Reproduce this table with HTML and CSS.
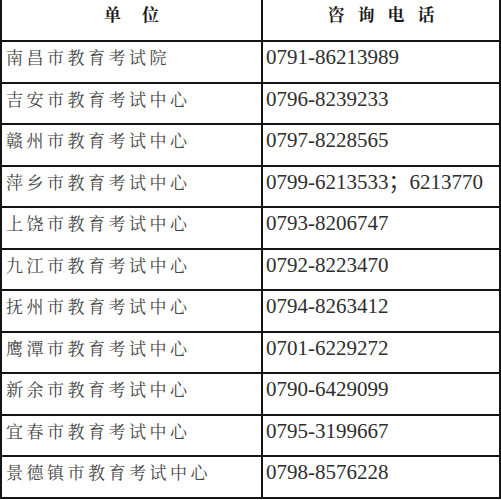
FILE: index.html
```html
<!DOCTYPE html>
<html lang="zh">
<head>
<meta charset="utf-8">
<link rel="stylesheet" href="styles.css">
</head>
<body>
<div class="table">
  <div class="row head">
    <div class="cell name"><span class="h1">单位</span></div>
    <div class="cell phone"><span class="h2">咨询电话</span></div>
  </div>
  <div class="row"><div class="cell name">南昌市教育考试院</div><div class="cell phone">0791-86213989</div></div>
  <div class="row"><div class="cell name">吉安市教育考试中心</div><div class="cell phone">0796-8239233</div></div>
  <div class="row"><div class="cell name">赣州市教育考试中心</div><div class="cell phone">0797-8228565</div></div>
  <div class="row"><div class="cell name">萍乡市教育考试中心</div><div class="cell phone">0799-6213533；6213770</div></div>
  <div class="row"><div class="cell name">上饶市教育考试中心</div><div class="cell phone">0793-8206747</div></div>
  <div class="row"><div class="cell name">九江市教育考试中心</div><div class="cell phone">0792-8223470</div></div>
  <div class="row"><div class="cell name">抚州市教育考试中心</div><div class="cell phone">0794-8263412</div></div>
  <div class="row"><div class="cell name">鹰潭市教育考试中心</div><div class="cell phone">0701-6229272</div></div>
  <div class="row"><div class="cell name">新余市教育考试中心</div><div class="cell phone">0790-6429099</div></div>
  <div class="row"><div class="cell name">宜春市教育考试中心</div><div class="cell phone">0795-3199667</div></div>
  <div class="row"><div class="cell name">景德镇市教育考试中心</div><div class="cell phone">0798-8576228</div></div>
</div>
</body>
</html>
```
FILE: styles.css
```css
html, body {
  margin: 0;
  padding: 0;
  background: #ffffff;
}
.table {
  width: 501px;
  box-sizing: border-box;
  border-left: 2px solid #151515;
  border-right: 2px solid #151515;
}
.row {
  display: grid;
  grid-template-columns: 261px 1fr;
  height: 41.5px;
  box-sizing: border-box;
  border-bottom: 2px solid #151515;
}
.row.head {
  height: 42px;
}
.cell {
  box-sizing: border-box;
  overflow: hidden;
  white-space: nowrap;
}
.cell.name {
  border-right: 2px solid #151515;
  padding: 5px 0 0 4px;
  font-family: "Noto Serif CJK SC", "Noto Sans CJK SC", sans-serif;
  font-size: 17px;
  line-height: 20px;
  letter-spacing: 3.5px;
  color: #444444;
}
.cell.phone {
  padding: 4px 0 0 3px;
  font-family: "Liberation Serif", "Noto Sans CJK SC", serif;
  font-size: 21px;
  line-height: 22px;
  color: #2e2e2e;
}
.head .cell {
  padding: 4px 0 0 0;
  text-align: center;
  font-family: "Noto Serif CJK SC", "Noto Sans CJK SC", sans-serif;
  font-weight: 700;
  font-size: 17px;
  line-height: 20px;
  color: #1a1a1a;
}
.h1 {
  letter-spacing: 21px;
  padding-left: 21px;
}
.h2 {
  letter-spacing: 13px;
  padding-left: 13px;
}
```
